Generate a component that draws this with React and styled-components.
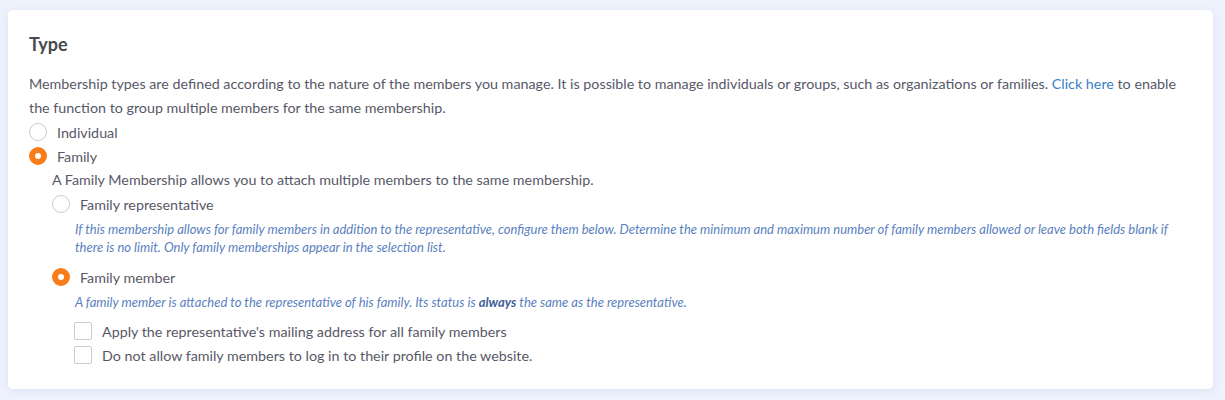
import React from 'react'
import styled, { createGlobalStyle } from 'styled-components'

const GlobalStyle = createGlobalStyle`
  body {
    margin: 0;
    background: #eef2fc;
    font-family: Lato, "Open Sans", sans-serif;
    color: #585868;
  }
`

const App = () => {
  return (
    <>
      <GlobalStyle />
      <Page>
        <Card>
          <Title>Type</Title>
          <Intro>
            Membership types are defined according to the nature of the members you manage. It is possible to manage individuals or groups, such as organizations or families. <Link href="#">Click here</Link> to enable the function to group multiple members for the same membership.
          </Intro>

          <Option>
            <Radio />
            <Label>Individual</Label>
          </Option>
          <Option>
            <Radio checked />
            <Label>Family</Label>
          </Option>

          <Nested>
            <Description>A Family Membership allows you to attach multiple members to the same membership.</Description>

            <Option>
              <Radio />
              <Label>Family representative</Label>
            </Option>
            <Hint>
              If this membership allows for family members in addition to the representative, configure them below. Determine the minimum and maximum number of family members allowed or leave both fields blank if there is no limit. Only family memberships appear in the selection list.
            </Hint>

            <Option $spaced>
              <Radio checked />
              <Label>Family member</Label>
            </Option>
            <Hint>
              A family member is attached to the representative of his family. Its status is <strong>always</strong> the same as the representative.
            </Hint>

            <Checks>
              <Option>
                <Checkbox />
                <Label>Apply the representative's mailing address for all family members</Label>
              </Option>
              <Option>
                <Checkbox />
                <Label>Do not allow family members to log in to their profile on the website.</Label>
              </Option>
            </Checks>
          </Nested>
        </Card>
      </Page>
    </>
  )
}

const Page = styled.div`
  padding: 10px 12px 11px 8px;
`

const Card = styled.section`
  background: #fff;
  border-radius: 5px;
  box-shadow: 0 2px 8px rgba(120, 140, 200, 0.15);
  padding: 21px 22px 22px 21px;
`

const Title = styled.h2`
  margin: 0 0 15px;
  font-size: 18px;
  font-weight: 700;
  color: #48484f;
  line-height: 26px;
`

const Intro = styled.p`
  margin: 0;
  font-size: 14.3px;
  line-height: 24px;
`

const Link = styled.a`
  color: #3a7fc6;
  text-decoration: none;
`

const Option = styled.label`
  display: flex;
  align-items: center;
  gap: 10px;
  height: 24px;
  margin-top: ${p => (p.$spaced ? '7px' : '0')};
  cursor: pointer;
`

const Radio = styled.span`
  width: 18px;
  height: 18px;
  box-sizing: border-box;
  border-radius: 50%;
  flex-shrink: 0;
  border: ${p => (p.checked ? '6px solid #f97c1a' : '1px solid #c9ccd6')};
  background: #fff;
`

const Checkbox = styled.span`
  width: 18px;
  height: 18px;
  box-sizing: border-box;
  border: 1px solid #c9ccd6;
  border-radius: 2px;
  flex-shrink: 0;
`

const Label = styled.span`
  font-size: 14.3px;
  color: #585868;
`

const Nested = styled.div`
  padding-left: 23px;
`

const Description = styled.p`
  margin: 0;
  font-size: 14.3px;
  line-height: 24px;
`

const Hint = styled.p`
  margin: 0 0 0 23px;
  font-size: 13px;
  font-style: italic;
  line-height: 18px;
  color: #5a7fc0;
  padding: 4px 0 2px;

  strong {
    font-weight: 700;
    color: #3f5f9a;
  }
`

const Checks = styled.div`
  margin: 6px 0 0 22px;
`

export default App
